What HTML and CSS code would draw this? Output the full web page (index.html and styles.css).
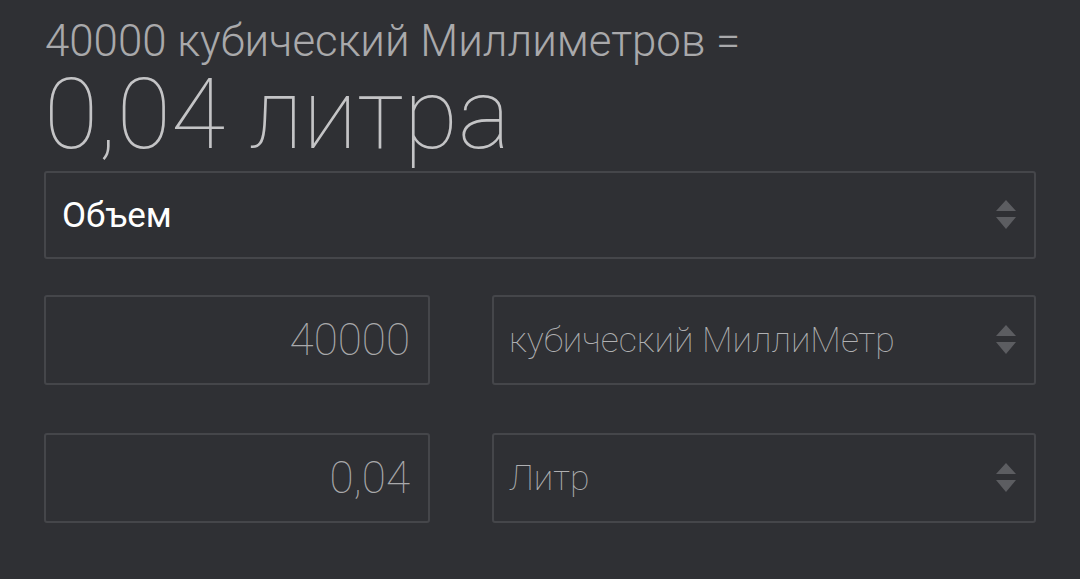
FILE: index.html
```html
<!DOCTYPE html>
<html lang="ru">
<head>
    <meta charset="UTF-8">
    <meta name="viewport" content="width=device-width, initial-scale=1.0">
    <title>Конвертер объема</title>
    <link rel="stylesheet" href="styles.css">
</head>
<body>

    <div class="converter">
        <!-- результат -->
        <div class="result">
            <div class="result-from">40000 кубический Миллиметров =</div>
            <div class="result-to">0,04 литра</div>
        </div>

        <!-- категория -->
        <div class="box category">
            <span class="category-name">Объем</span>
            <svg class="arrows" width="20" height="32" viewBox="0 0 20 32"><path d="M10 1 L20 12 L0 12 Z M0 18 L20 18 L10 30 Z" fill="#5c5d61"/></svg>
        </div>

        <div class="row">
            <div class="box value">40000</div>
            <div class="box unit">
                <span>кубический МиллиМетр</span>
                <svg class="arrows" width="20" height="32" viewBox="0 0 20 32"><path d="M10 1 L20 12 L0 12 Z M0 18 L20 18 L10 30 Z" fill="#5c5d61"/></svg>
            </div>
        </div>

        <div class="row">
            <div class="box value">0,04</div>
            <div class="box unit">
                <span>Литр</span>
                <svg class="arrows" width="20" height="32" viewBox="0 0 20 32"><path d="M10 1 L20 12 L0 12 Z M0 18 L20 18 L10 30 Z" fill="#5c5d61"/></svg>
            </div>
        </div>
    </div>

</body>
</html>
```

FILE: styles.css
```css
body {
    font-family: Roboto, "Noto Sans", sans-serif;
    margin: 0;
    padding: 0;
    background: #2f3034;
    color: #a9a9ab;
    width: 1080px;
    height: 579px;
    overflow: hidden;
}
.converter {
    padding: 17px 44px 0 44px;
}
.result-from {
    font-size: 43.8px;
    font-weight: 300;
    line-height: 48px;
    padding-left: 1px;
}
.result-to {
    font-size: 99px;
    font-weight: 100;
    line-height: 99px;
    color: #c4c4c6;
}
.box {
    border: 2px solid #45464a;
    border-radius: 3px;
    box-sizing: border-box;
    display: flex;
    align-items: center;
}
.category {
    margin-top: 7px;
    height: 88px;
    padding: 0 18px 0 16px;
    justify-content: space-between;
}
.category-name {
    font-size: 35px;
    font-weight: 400;
    color: #ffffff;
}
.row {
    display: flex;
    gap: 62px;
    margin-top: 36px;
}
.row + .row {
    margin-top: 48px;
}
.value {
    width: 386px;
    height: 90px;
    justify-content: flex-end;
    padding-right: 18px;
    font-size: 44px;
    font-weight: 100;
    color: #a9a9ab;
}
.unit {
    flex: 1;
    height: 90px;
    justify-content: space-between;
    padding: 0 18px 0 15px;
    font-size: 35.6px;
    font-weight: 100;
    color: #b0b0b2;
}
.arrows {
    display: block;
}
```
